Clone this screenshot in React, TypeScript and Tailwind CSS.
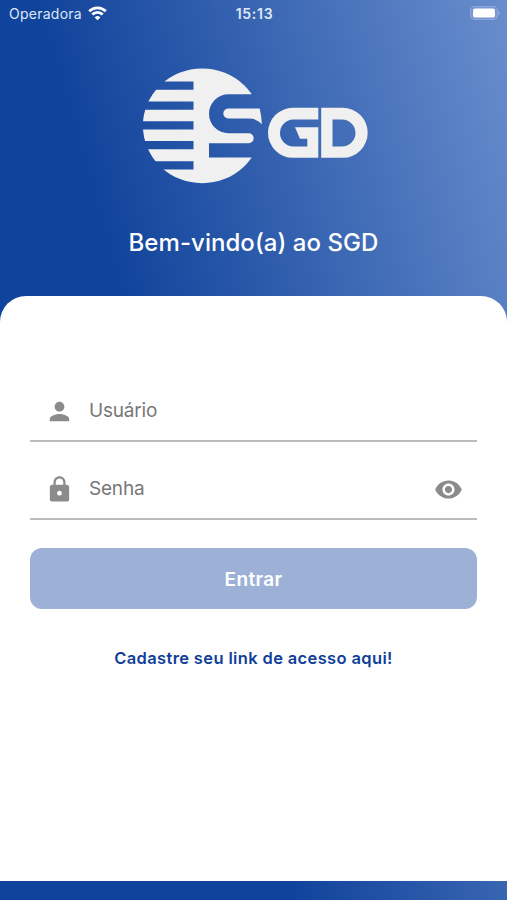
import React, { useState } from 'react';
import { MdLock, MdPerson, MdVisibility, MdVisibilityOff } from 'react-icons/md';

const StatusBar: React.FC = () => (
  <div className="grid h-7 grid-cols-3 items-center pl-[9px] pr-[7px] font-['Inter',sans-serif] text-[14px] leading-none text-[#dfe8f8]">
    <div className="flex items-center gap-[6px]">
      <span className="tracking-[0.25px]">Operadora</span>
      <svg className="-mt-[2px]" width="19" height="15" viewBox="0 0 19 15" fill="none" stroke="#fff" strokeWidth="2.8">
        <path d="M1.2 5.3a11.8 11.8 0 0 1 16.6 0" />
        <path d="M4.3 8.6a7.4 7.4 0 0 1 10.4 0" />
        <path d="M9.5 14.2 6.7 11.4a4 4 0 0 1 5.6 0z" fill="#fff" stroke="none" />
      </svg>
    </div>
    <span className="text-center font-semibold tracking-[0.7px]">15:13</span>
    <svg className="-mt-[2px] justify-self-end" width="30" height="14" viewBox="0 0 30 14">
      <rect x="0.6" y="0.6" width="26.8" height="12.8" rx="4" fill="#7595d2" stroke="#91abdd" strokeWidth="1" />
      <rect x="3" y="2.6" width="22" height="8.8" rx="2" fill="#fff" />
      <path d="M28.4 4.8c1.8.8 1.8 3.6 0 4.4z" fill="#91abdd" />
    </svg>
  </div>
);

const Logo: React.FC = () => (
  <svg width="226" height="116" viewBox="142 67.5 226 116" fill="#f0f0f0" role="img" aria-label="SGD">
    <mask id="globe">
      <ellipse cx="202.2" cy="125.3" rx="59.3" ry="57.4" fill="#fff" />
      <path
        d="M140 81h53.5v8.3H140zM140 101h53.5v8.2H140zM140 120.8h53.5v8.2H140zM140 140.4h53.5v8.3H140zM140 160.7h53.5v8.3H140z"
        fill="#000"
      />
      <path
        d="M270 93.7H228.5a19.5 19.5 0 0 0 0 39H248.7a5 5 0 0 1 0 10H209V157H270z"
        fill="#000"
      />
    </mask>
    <rect x="142" y="67" width="122" height="117" mask="url(#globe)" />
    <path d="M228.3 108H259.7Q261.4 115 261.9 123.7Q257 118 249 118H228.3a5 5 0 0 1 0-10z" />
    <path d="M318.3 107.3H293a25 25 0 0 0 0 50H318.3V126.7H295L300 138.3H307.3V146H293.5a13.5 13.5 0 0 1 0-27H318.3z" />
    <path
      fillRule="evenodd"
      d="M321.2 107.3H342.7a25 25 0 0 1 0 50H321.2zM332.5 119V146H342a13.5 13.5 0 0 0 0-27z"
    />
  </svg>
);

interface FieldProps {
  icon: React.ReactNode;
  placeholder: string;
  type?: string;
  value: string;
  onChange: (value: string) => void;
  action?: React.ReactNode;
}

const Field: React.FC<FieldProps> = ({ icon, placeholder, type = 'text', value, onChange, action }) => (
  <label className="flex h-[62px] items-center border-b-2 border-[#bbb] pl-[15px] pr-[14px] pt-[2px] text-[#8b8b8b]">
    {icon}
    <input
      className="ml-[15px] min-w-0 flex-1 bg-transparent pt-px text-[19px] tracking-[-0.2px] text-[#777] outline-none placeholder:text-[#777]"
      type={type}
      placeholder={placeholder}
      value={value}
      onChange={(e) => onChange(e.target.value)}
    />
    {action}
  </label>
);

const App: React.FC = () => {
  const [user, setUser] = useState('');
  const [password, setPassword] = useState('');
  const [visible, setVisible] = useState(false);

  return (
    <div className="flex h-[900px] w-full flex-col overflow-hidden bg-[linear-gradient(74deg,#10439b_38.5%,#698ecd_100%)] font-['Inter',sans-serif]">
      <StatusBar />

      <header className="flex h-[268px] flex-col items-center pt-[39.5px] text-white">
        <div className="pl-[3px]">
          <Logo />
        </div>
        <h1 className="mt-[43px] text-[24px] font-medium leading-[31px] tracking-[0.05px]">Bem-vindo(a) ao SGD</h1>
      </header>

      <main className="flex h-[584.5px] flex-col rounded-t-[26px] bg-white px-[30px] pt-[84px]">
        <form onSubmit={(e) => e.preventDefault()} className="flex flex-col">
          <Field icon={<MdPerson size={29} />} placeholder="Usuário" value={user} onChange={setUser} />
          <div className="mt-4">
            <Field
              icon={<MdLock size={29} />}
              placeholder="Senha"
              type={visible ? 'text' : 'password'}
              value={password}
              onChange={setPassword}
              action={
                <button type="button" onClick={() => setVisible(!visible)}>
                  {visible ? <MdVisibilityOff size={29} /> : <MdVisibility size={29} />}
                </button>
              }
            />
          </div>
          <button
            type="submit"
            className="mt-7 h-[61px] rounded-xl bg-[#9db1d7] pt-[3px] text-[19px] font-semibold tracking-[0.35px] text-white"
          >
            Entrar
          </button>
        </form>
        <a href="#" className="mt-[37px] self-center text-[16.5px] font-semibold leading-6 tracking-[0.36px] text-[#103f98]">
          Cadastre seu link de acesso aqui!
        </a>
      </main>
    </div>
  );
};

export default App;
